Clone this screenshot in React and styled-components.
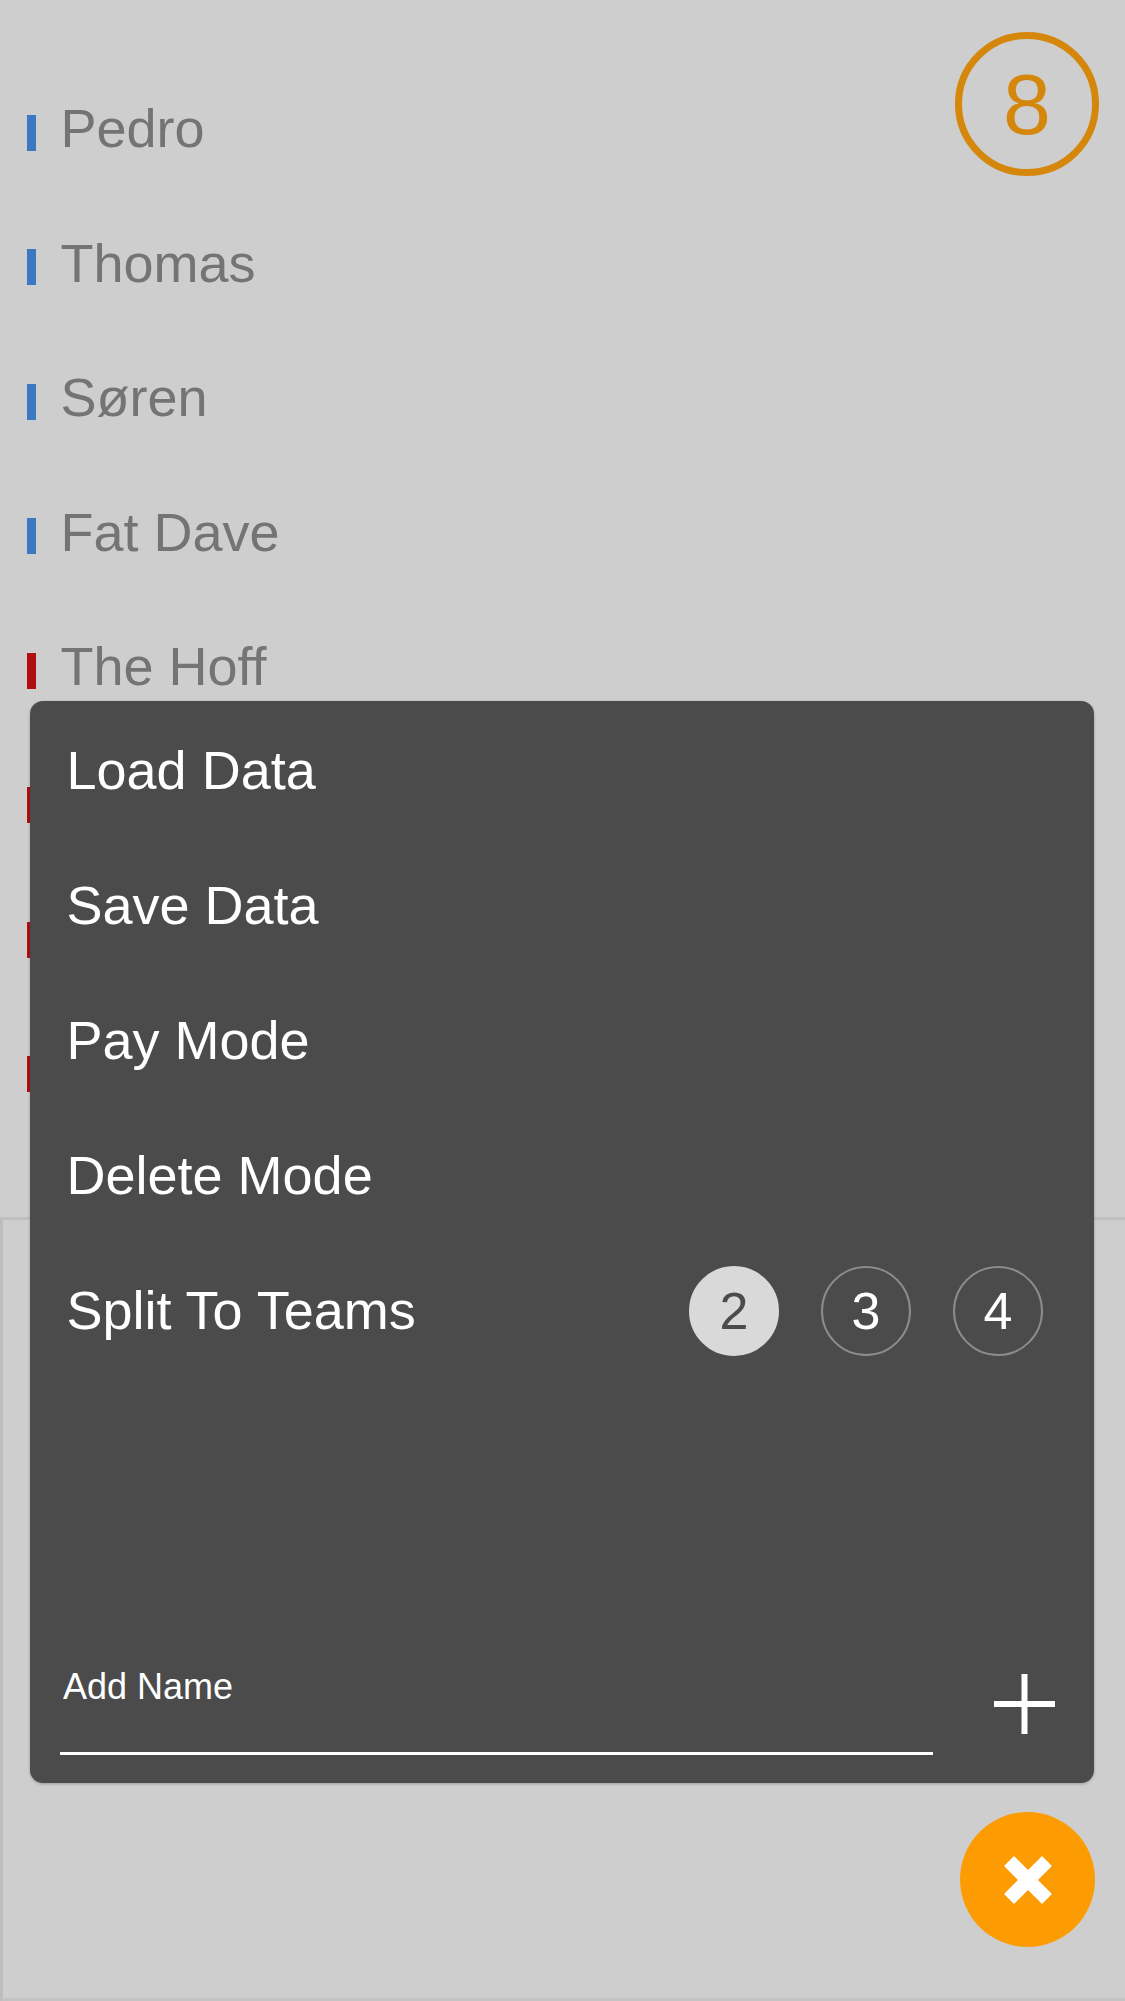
import React from "react";
import styled, { createGlobalStyle } from "styled-components";

const Global = createGlobalStyle`
  html, body { margin: 0; padding: 0; background: #cecece; }
  body { font-family: "Liberation Sans", Arial, Helvetica, sans-serif; }
  * { box-sizing: border-box; }
`;

const Screen = styled.div`
  position: relative;
  width: 1125px;
  height: 2001px;
  overflow: hidden;
  background: #cecece;
  display: flex;
  flex-direction: column;
`;

const List = styled.ul`
  list-style: none;
  margin: 0;
  padding: 61px 0 0 0;
`;

const Row = styled.li`
  height: 134.5px;
  display: flex;
  align-items: center;
  padding-left: 27px;
  gap: 24.5px;
`;

const Bar = styled.span`
  width: 9px;
  height: 36px;
  margin-top: 9px;
  background: ${(p) => (p.$team === "red" ? "#b10e10" : "#3b79c3")};
  flex: none;
`;

const Name = styled.span`
  font-size: 54px;
  line-height: 1.15;
  color: #747474;
`;

const Footer = styled.div`
  flex: 1;
  margin-top: 80px;
  border-top: 3px solid #c0c0c0;
  border-left: 3px solid #bdbdbd;
  border-bottom: 3px solid #c3c3c3;
`;

const Count = styled.div`
  position: absolute;
  top: 32px;
  right: 26px;
  width: 144px;
  height: 144px;
  border-radius: 50%;
  border: 7px solid #d5870c;
  color: #d5870c;
  font-size: 86px;
  line-height: 1;
  display: flex;
  align-items: center;
  justify-content: center;
`;

const Panel = styled.div`
  position: absolute;
  left: 30px;
  top: 701px;
  width: 1064px;
  height: 1082px;
  background: #4b4b4b;
  border-radius: 13px;
  box-shadow: 0 1px 3px rgba(0, 0, 0, 0.25);
  display: flex;
  flex-direction: column;
  padding-top: 2px;
`;

const Menu = styled.div`
  display: flex;
  flex-direction: column;
`;

const MenuItem = styled.div`
  height: 135px;
  display: flex;
  align-items: center;
  justify-content: space-between;
  padding: 0 51px 0 36.5px;
  color: #ffffff;
  font-size: 54px;
  line-height: 1.15;
`;

const TeamChoices = styled.div`
  display: flex;
  gap: 42px;
`;

const TeamButton = styled.button`
  width: 90px;
  height: 90px;
  border-radius: 50%;
  padding: 0;
  font-family: inherit;
  font-size: 52px;
  line-height: 1;
  display: flex;
  align-items: center;
  justify-content: center;
  cursor: pointer;
  border: 2px solid ${(p) => (p.$active ? "#d9d9d9" : "#8c8c8c")};
  background: ${(p) => (p.$active ? "#d9d9d9" : "transparent")};
  color: ${(p) => (p.$active ? "#4b4b4b" : "#ffffff")};
`;

const Spacer = styled.div`
  flex: 1;
`;

const AddRow = styled.div`
  display: flex;
  align-items: flex-end;
  gap: 61px;
  padding: 0 39px 28px 30px;
`;

const NameInput = styled.input`
  flex: 1;
  min-width: 0;
  background: transparent;
  border: none;
  border-bottom: 3px solid #ffffff;
  outline: none;
  color: #ffffff;
  font-family: inherit;
  font-size: 36px;
  line-height: 40px;
  height: 88px;
  padding: 0 0 45px 3px;
  &::placeholder {
    color: #ffffff;
    opacity: 1;
  }
`;

const AddButton = styled.button`
  width: 61px;
  height: 60px;
  margin-bottom: 21px;
  padding: 0;
  border: none;
  background: transparent;
  display: flex;
  cursor: pointer;
`;

const Fab = styled.button`
  position: absolute;
  right: 30px;
  top: 1812px;
  width: 135px;
  height: 135px;
  border-radius: 50%;
  border: none;
  padding: 0;
  background: #fd9c02;
  display: flex;
  align-items: center;
  justify-content: center;
  cursor: pointer;
`;

const players = [
  { id: 1, name: "Pedro", team: "blue" },
  { id: 2, name: "Thomas", team: "blue" },
  { id: 3, name: "Søren", team: "blue" },
  { id: 4, name: "Fat Dave", team: "blue" },
  { id: 5, name: "The Hoff", team: "red" },
  { id: 6, name: "", team: "red" },
  { id: 7, name: "", team: "red" },
  { id: 8, name: "", team: "red" },
];

export default function App() {
  return (
    <>
      <Global />
      <Screen>
        <List>
          {players.map((p) => (
            <Row key={p.id}>
              <Bar $team={p.team} />
              <Name>{p.name}</Name>
            </Row>
          ))}
        </List>
        <Footer />
        <Count>{players.length}</Count>

        <Panel>
          <Menu>
            <MenuItem>Load Data</MenuItem>
            <MenuItem>Save Data</MenuItem>
            <MenuItem>Pay Mode</MenuItem>
            <MenuItem>Delete Mode</MenuItem>
            <MenuItem>
              <span>Split To Teams</span>
              <TeamChoices>
                <TeamButton $active>2</TeamButton>
                <TeamButton>3</TeamButton>
                <TeamButton>4</TeamButton>
              </TeamChoices>
            </MenuItem>
          </Menu>
          <Spacer />
          <AddRow>
            <NameInput placeholder="Add Name" />
            <AddButton aria-label="Add">
              <svg width="61" height="60" viewBox="0 0 61 60">
                <line x1="30.5" y1="0" x2="30.5" y2="60" stroke="#fff" strokeWidth="6" />
                <line x1="0" y1="30" x2="61" y2="30" stroke="#fff" strokeWidth="6" />
              </svg>
            </AddButton>
          </AddRow>
        </Panel>

        <Fab aria-label="Close">
          <svg width="62" height="62" viewBox="0 0 62 62">
            <line x1="12" y1="12" x2="50" y2="50" stroke="#fff" strokeWidth="14" />
            <line x1="50" y1="12" x2="12" y2="50" stroke="#fff" strokeWidth="14" />
          </svg>
        </Fab>
      </Screen>
    </>
  );
}
